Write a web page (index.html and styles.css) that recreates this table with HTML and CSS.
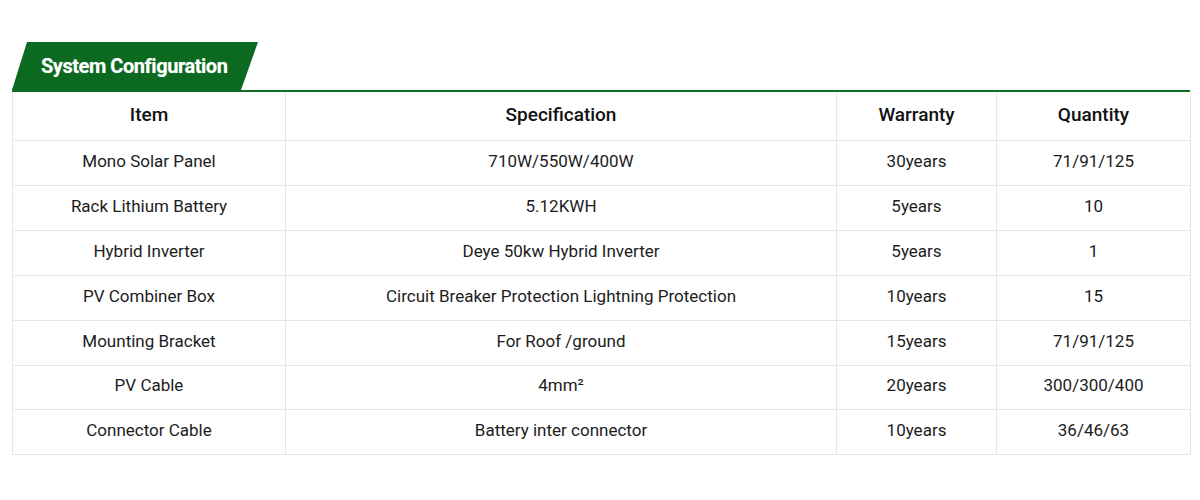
FILE: index.html
```html
<!DOCTYPE html>
<html>
<head>
<meta charset="utf-8">
<link rel="stylesheet" href="styles.css">
</head>
<body>
<div class="wrap">
  <div class="tabbar">
    <div class="tab">System Configuration</div>
  </div>
  <table class="spec">
    <colgroup>
      <col class="c1"><col class="c2"><col class="c3"><col class="c4">
    </colgroup>
    <thead>
      <tr><th>Item</th><th>Specification</th><th>Warranty</th><th>Quantity</th></tr>
    </thead>
    <tbody>
      <tr><td>Mono Solar Panel</td><td>710W/550W/400W</td><td>30years</td><td>71/91/125</td></tr>
      <tr><td>Rack Lithium Battery</td><td>5.12KWH</td><td>5years</td><td>10</td></tr>
      <tr><td>Hybrid Inverter</td><td>Deye 50kw Hybrid Inverter</td><td>5years</td><td>1</td></tr>
      <tr><td>PV Combiner Box</td><td>Circuit Breaker Protection Lightning Protection</td><td>10years</td><td>15</td></tr>
      <tr><td>Mounting Bracket</td><td>For Roof /ground</td><td>15years</td><td>71/91/125</td></tr>
      <tr class="short"><td>PV Cable</td><td>4mm²</td><td>20years</td><td>300/300/400</td></tr>
      <tr><td>Connector Cable</td><td>Battery inter connector</td><td>10years</td><td>36/46/63</td></tr>
    </tbody>
  </table>
</div>
</body>
</html>
```

FILE: styles.css
```css
html, body {
  margin: 0;
  padding: 0;
  background: #ffffff;
}
body {
  font-family: Roboto, "Liberation Sans", Arial, sans-serif;
  color: #1a1a1a;
}
.wrap {
  padding: 42px 0 0 12px;
  width: 1178px;
}
.tabbar {
  display: flex;
  border-bottom: 2px solid #0d6b22;
}
.tab {
  width: 246px;
  height: 48px;
  box-sizing: border-box;
  background: #0b6a20;
  clip-path: polygon(15px 0, 100% 0, calc(100% - 17px) 100%, 0 100%);
  color: #ffffff;
  font-weight: 700;
  font-size: 20px;
  letter-spacing: -0.45px;
  display: flex;
  align-items: center;
  padding: 0 0 1px 29px;
  text-shadow: 0 0 1px rgba(255,255,255,0.4);
}
.spec {
  width: 1178px;
  border-collapse: collapse;
  table-layout: fixed;
}
.c1 { width: 273px; }
.c2 { width: 551px; }
.c3 { width: 160px; }
.c4 { width: 194px; }
.spec th, .spec td {
  border: 1px solid #e6e6e6;
  text-align: center;
  padding: 0;
}
.spec th {
  height: 45px;
  padding-bottom: 3px;
  font-size: 19px;
  font-weight: 500;
  color: #111;
}
.spec td {
  height: 39px;
  padding-bottom: 5px;
  font-size: 17px;
  font-weight: 400;
  color: #1c1c1c;
}
.spec tr.short td {
  height: 38px;
}
.spec thead tr:first-child th {
  border-top: none;
}
```
